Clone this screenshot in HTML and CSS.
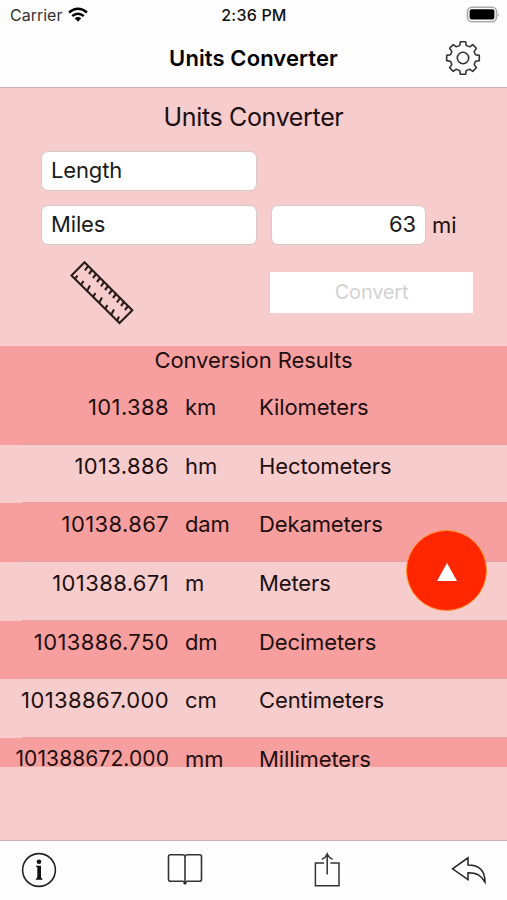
FILE: index.html
```html
<!DOCTYPE html>
<html lang="en">
<head>
    <meta charset="UTF-8">
    <title>Units Converter</title>
    <link rel="stylesheet" href="styles.css">
</head>
<body>
    <header>
        <div class="status-bar">
            <div class="carrier">
                <span>Carrier</span>
                <svg width="20" height="16" viewBox="0 0 20 16" fill="none" stroke="#000" stroke-width="2.5">
                    <path d="M1 5.4Q10 -1.8 19 5.4M4.2 9Q10 4.4 15.8 9"/>
                    <path d="M6.7 11.2Q10 8.6 13.3 11.2L10 14.8Z" fill="#000" stroke="none"/>
                </svg>
            </div>
            <div class="time">2:36 PM</div>
            <div class="battery">
                <svg width="34" height="18" viewBox="0 0 34 18">
                    <rect x="1.5" y="1.2" width="29" height="14.6" rx="4.5" fill="#fff" stroke="#aaa" stroke-width="1.6"/>
                    <rect x="3.6" y="3.2" width="24.8" height="10.4" rx="2" fill="#000"/>
                    <path d="M32 6.4Q33.8 8.5 32 10.6Z" fill="#aaa"/>
                </svg>
            </div>
        </div>
        <div class="nav-bar">
            <span></span>
            <h1>Units Converter</h1>
            <svg class="gear" width="36" height="36" viewBox="-18 -18 36 36" fill="none" stroke="#333" stroke-width="1.6" stroke-linejoin="round">
                <path d="M-2.6 -16.3H2.6L3.2 -12.6Q4.8 -11.7 6.65 -11.2L9.7 -13.4L13.4 -9.7L11.2 -6.65Q11.7 -4.8 12.6 -3.2L16.3 -2.6V2.6L12.6 3.2Q11.7 4.8 11.2 6.65L13.4 9.7L9.7 13.4L6.65 11.2Q4.8 11.7 3.2 12.6L2.6 16.3H-2.6L-3.2 12.6Q-4.8 11.7 -6.65 11.2L-9.7 13.4L-13.4 9.7L-11.2 6.65Q-11.7 4.8 -12.6 3.2L-16.3 2.6V-2.6L-12.6 -3.2Q-11.7 -4.8 -11.2 -6.65L-13.4 -9.7L-9.7 -13.4L-6.65 -11.2Q-4.8 -11.7 -3.2 -12.6Z"/>
                <circle r="5.7"/>
            </svg>
        </div>
    </header>

    <main>
        <h2>Units Converter</h2>
        <div class="form">
            <input type="text" class="category" value="Length">
            <div class="form-row">
                <input type="text" class="unit" value="Miles">
                <input type="text" class="amount" value="63">
                <span class="symbol">mi</span>
            </div>
            <div class="form-row actions">
                <svg class="ruler" width="64" height="64" viewBox="0 0 64 64" fill="none" stroke="#2b1c1c" stroke-width="2.1">
                    <path d="M14.5 1.3L62.3 49.2L49.5 62L1.5 14.5Z"/>
                    <path d="M18 5l-3 4.5M22 9l-3 4M26 13l-3 4M30 17l-3 4M34 21l-3 4.5M38 25l-3 4M42 29l-3 4M46 33l-3 4M50 37l-3 4.5M54 41l-3 4M58 45l-3 4"/>
                    <path d="M5 18l2.5 -3.5M11 24l2.5 -4M17 30l3 -5.5M23 36l2.5 -4M29 42l3 -5.5M35 48l2.5 -4M41 54l3 -5.5M47 60l2 -4.5"/>
                </svg>
                <button disabled>Convert</button>
            </div>
        </div>

        <section class="results">
            <h3>Conversion Results</h3>
            <div class="row"><span class="value">101.388</span><span class="abbr">km</span><span>Kilometers</span></div>
            <div class="row"><span class="value">1013.886</span><span class="abbr">hm</span><span>Hectometers</span></div>
            <div class="row"><span class="value">10138.867</span><span class="abbr">dam</span><span>Dekameters</span></div>
            <div class="row"><span class="value">101388.671</span><span class="abbr">m</span><span>Meters</span></div>
            <div class="row"><span class="value">1013886.750</span><span class="abbr">dm</span><span>Decimeters</span></div>
            <div class="row"><span class="value">10138867.000</span><span class="abbr">cm</span><span>Centimeters</span></div>
            <div class="row"><span class="value long">101388672.000</span><span class="abbr">mm</span><span>Millimeters</span></div>
        </section>

        <div class="scroll-top">
            <svg width="20" height="18" viewBox="0 0 20 18"><path d="M10 0L20 18H0Z" fill="#fff"/></svg>
        </div>
    </main>

    <footer>
        <svg width="36" height="36" viewBox="0 0 36 36" fill="none" stroke="#222" stroke-width="1.6">
            <circle cx="18" cy="18" r="16.4"/>
            <circle cx="18" cy="9.8" r="2.3" fill="#111" stroke="none"/>
            <path d="M15 13.8H20V25.5L21.5 27V27.8H14.8V27L16.3 25.5V15.3L15 14.8Z" fill="#111" stroke="none"/>
        </svg>
        <svg class="book" width="36" height="36" viewBox="0 0 36 36" fill="none" stroke="#333" stroke-width="1.6">
            <path d="M18 4.5Q17.5 2.8 15.5 2.8H3.5Q1.5 2.8 1.5 4.8V27.2Q1.5 29.2 3.5 29.2H16L18 30.5L20 29.2H32.5Q34.5 29.2 34.5 27.2V4.8Q34.5 2.8 32.5 2.8H20.5Q18.5 2.8 18 4.5V29"/>
            <circle cx="18" cy="31" r="1.6" fill="#222" stroke="none"/>
        </svg>
        <svg class="share" width="36" height="36" viewBox="0 0 36 36" fill="none" stroke="#333" stroke-width="1.5">
            <path d="M15 11H6.4V33.8H30V11H21.5M18.2 22.5V2M13 7.2Q17 5.5 18.2 2Q19.5 5.5 23.5 7.2"/>
        </svg>
        <svg width="36" height="36" viewBox="0 0 36 36" fill="none" stroke="#222" stroke-width="1.5">
            <path d="M1.5 16.8L17 5.8V13C28 13 34 19 34 30C30 23.5 26 20.7 17 20.7V27.5Z"/>
        </svg>
    </footer>
</body>
</html>
```

FILE: styles.css
```css
* {
    box-sizing: border-box;
}
body {
    margin: 0;
    height: 900px;
    display: flex;
    flex-direction: column;
    overflow: hidden;
    background-color: #fefefe;
    color: #1d0f0f;
    font-family: Inter, "Liberation Sans", sans-serif;
    font-size: 22px;
}
h1, h2, h3 {
    margin: 0;
    text-align: center;
}
header {
    height: 88px;
    border-bottom: 1px solid #d5b4b6;
}
.status-bar {
    display: grid;
    grid-template-columns: 1fr auto 1fr;
    align-items: center;
    height: 29px;
    padding: 0 7px 0 10px;
    font-size: 16px;
    color: #333;
}
.carrier {
    display: flex;
    align-items: center;
    gap: 6px;
}
.time {
    margin-right: 2px;
    font-weight: 500;
    letter-spacing: 0.2px;
    color: #111;
}
.battery {
    display: flex;
    justify-content: flex-end;
}
.nav-bar {
    display: grid;
    grid-template-columns: 36px 1fr 36px;
    align-items: center;
    height: 57px;
    padding: 0 26px;
}
h1 {
    font-size: 22px;
    font-weight: 600;
    letter-spacing: 0.1px;
    color: #000;
}
main {
    position: relative;
    flex: 1;
    background-color: #f6cccd;
}
h2 {
    padding-top: 13px;
    line-height: 32px;
    font-size: 25px;
    font-weight: 400;
    letter-spacing: -0.35px;
}
.form {
    display: flex;
    flex-direction: column;
    height: 213px;
    padding: 18px 34px 0 41px;
}
input {
    height: 40px;
    padding: 0 9px 3px;
    border: 1px solid #d3c9c9;
    border-radius: 7px;
    background-color: #fff;
    color: #1a1a1a;
    font: inherit;
    letter-spacing: -0.15px;
}
.category, .unit {
    width: 216px;
}
.form-row {
    display: flex;
    align-items: center;
    margin-top: 14px;
}
.amount {
    width: 155px;
    margin: 0 6px 0 14px;
    text-align: right;
}
.actions {
    justify-content: space-between;
    margin-top: 16px;
}
.ruler {
    margin-left: 29px;
}
button {
    width: 203px;
    height: 41px;
    margin-bottom: 2px;
    border: none;
    background-color: #fff;
    color: #d2d2d2;
    font: inherit;
    font-size: 20px;
    letter-spacing: -0.2px;
}
.results {
    height: 421px;
    overflow: hidden;
}
h3 {
    height: 40px;
    line-height: 29px;
    font-size: 22px;
    font-weight: 400;
    letter-spacing: -0.1px;
    background-color: #f69f9e;
}
.row {
    display: grid;
    grid-template-columns: 169px 58px 1fr;
    column-gap: 16px;
    height: 58.7px;
    padding-top: 7px;
    line-height: 28px;
    letter-spacing: -0.12px;
    /* separator starts after the left inset, like a table cell */
    background: linear-gradient(#e2a2a3, #e2a2a3) 22px 100% / 100% 1px no-repeat;
}
.row:nth-child(even) {
    background-color: #f69f9e;
}
.value {
    text-align: right;
    letter-spacing: 0.38px;
}
.long {
    font-size: 21px;
    letter-spacing: 0.1px;
}
.scroll-top {
    position: absolute;
    top: 442px;
    right: 20px;
    display: flex;
    align-items: center;
    justify-content: center;
    width: 81px;
    height: 81px;
    padding-top: 2px;
    border: 1.5px solid #ff9326;
    border-radius: 50%;
    background-color: #ff2600;
}
footer {
    display: flex;
    justify-content: space-between;
    height: 60px;
    padding: 11px 20px 0 21px;
    border-top: 1px solid #d5b4b6;
}
.book {
    margin-left: 5px;
}
.share {
    margin-right: 1px;
}
```
